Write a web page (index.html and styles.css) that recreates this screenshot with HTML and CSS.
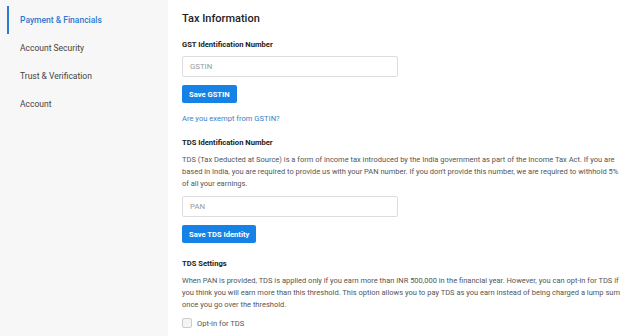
FILE: index.html
```html
<!DOCTYPE html>
<html lang="en">
<head>
  <meta charset="UTF-8" />
  <title>Settings - Tax Information</title>
  <link rel="stylesheet" href="styles.css">
</head>
<body>

<div class="layout">
  <nav class="sidebar">
    <a class="nav-item active" href="#">Payment &amp; Financials</a>
    <a class="nav-item" href="#">Account Security</a>
    <a class="nav-item" href="#">Trust &amp; Verification</a>
    <a class="nav-item" href="#">Account</a>
  </nav>

  <main class="content">
    <h1>Tax Information</h1>

    <h3 class="first">GST Identification Number</h3>
    <input class="field" type="text" placeholder="GSTIN" />
    <button class="btn">Save GSTIN</button>
    <a class="link" href="#">Are you exempt from GSTIN?</a>

    <h3>TDS Identification Number</h3>
    <p>TDS (Tax Deducted at Source) is a form of income tax introduced by the India government as part of the Income Tax Act. If you are based in India, you are required to provide us with your PAN number. If you don't provide this number, we are required to withhold 5% of all your earnings.</p>
    <input class="field" type="text" placeholder="PAN" />
    <button class="btn">Save TDS Identity</button>

    <h3 class="settings">TDS Settings</h3>
    <p>When PAN is provided, TDS is applied only if you earn more than INR 500,000 in the financial year. However, you can opt-in for TDS if you think you will earn more than this threshold. This option allows you to pay TDS as you earn instead of being charged a lump sum once you go over the threshold.</p>
    <label class="check"><span class="box"></span>Opt-in for TDS</label>
  </main>
</div>

</body>
</html>
```

FILE: styles.css
```css
body { margin: 0; font-family: Roboto, 'Liberation Sans', sans-serif; color: #333; background: #fff; }
.layout { display: flex; min-height: 336px; }

.sidebar { width: 168px; flex: none; background: #f7f7f7; padding-top: 6px; display: flex; flex-direction: column; }
.nav-item { display: block; height: 28px; line-height: 28px; font-size: 8.5px; color: #444; text-decoration: none; margin-left: 7px; padding-left: 11px; border-left: 2px solid transparent; }
.nav-item.active { color: #2a7ad2; font-weight: 500; border-left-color: #2a7ad2; }

.content { flex: 1; padding: 10px 16px 0 14px; display: flex; flex-direction: column; align-items: flex-start; }
h1 { font-size: 11px; font-weight: 500; color: #222; margin: 1px 0 0; line-height: 16px; }
h3 { font-size: 7.6px; font-weight: 700; color: #222; margin: 12px 0 0; line-height: 12px; }
h3.first { margin-top: 12px; }
p { font-size: 7.5px; line-height: 12px; color: #555; margin: 5px 0 0; }
.field { width: 216px; height: 21px; box-sizing: border-box; border: 1px solid #ddd; border-radius: 2px; margin-top: 5px; padding: 0 7px; font-family: inherit; font-size: 7.8px; color: #333; }
.field::placeholder { color: #999; }
.btn { margin-top: 8px; height: 18px; padding: 0 7px; border: none; border-radius: 2px; background: #1682e6; color: #fff; font-family: inherit; font-size: 7.6px; font-weight: 700; }
.link { margin-top: 10px; font-size: 7.6px; color: #3a7fc4; text-decoration: none; line-height: 12px; }
p + .field { margin-top: 6px; }
.settings { margin-top: 15px; }
.check { display: flex; align-items: center; gap: 5px; margin-top: 7px; font-size: 7.6px; color: #555; }
.box { width: 8px; height: 8px; border: 1px solid #ccc; border-radius: 2px; background: #f4f4f4; }
```
